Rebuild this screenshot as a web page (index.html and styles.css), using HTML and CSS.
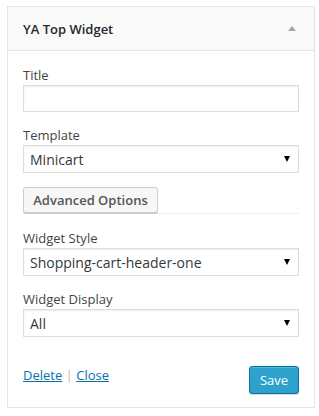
FILE: index.html
```html
<!DOCTYPE html>
<html lang="en">
<head>
    <meta charset="UTF-8">
    <title>YA Top Widget</title>
    <link rel="stylesheet" href="styles.css">
</head>
<body>

<div class="widget">
    <div class="widget-top">
        <h3>YA Top Widget</h3>
        <span class="toggle"></span>
    </div>

    <div class="widget-inside">
        <p class="field">
            <label for="title">Title</label>
            <input type="text" id="title">
        </p>
        <p class="field">
            <label for="template">Template</label>
            <span class="select-wrap">
                <select id="template">
                    <option>Minicart</option>
                </select>
            </span>
        </p>
        <div class="advanced">
            <button class="button">Advanced Options</button>
        </div>
        <p class="field">
            <label for="style">Widget Style</label>
            <span class="select-wrap">
                <select id="style">
                    <option>Shopping-cart-header-one</option>
                </select>
            </span>
        </p>
        <p class="field">
            <label for="display">Widget Display</label>
            <span class="select-wrap">
                <select id="display">
                    <option>All</option>
                </select>
            </span>
        </p>

        <div class="widget-actions">
            <div class="links">
                <a href="#">Delete</a> <span class="sep">|</span> <a href="#">Close</a>
            </div>
            <button class="button-primary">Save</button>
        </div>
    </div>
</div>

</body>
</html>
```

FILE: styles.css
```css
body {
    margin: 0;
    background: #fff;
    font-family: "Open Sans", "Liberation Sans", sans-serif;
    font-size: 13px;
    color: #444;
}
.widget {
    width: 308px;
    box-sizing: border-box;
    margin: 6px 0 0 7px;
    border: 1px solid #e5e5e5;
    background: #fff;
    box-shadow: 0 1px 1px rgba(0, 0, 0, 0.04);
}
.widget-top {
    height: 43px;
    background: #fafafa;
    border-bottom: 1px solid #e5e5e5;
    display: flex;
    align-items: center;
    justify-content: space-between;
    padding: 0 15px;
}
.widget-top h3 {
    margin: 0;
    font-size: 13px;
    font-weight: 600;
    color: #23282d;
}
.toggle {
    width: 0;
    height: 0;
    margin-right: 3px;
    border-left: 4px solid transparent;
    border-right: 4px solid transparent;
    border-bottom: 5px solid #a0a5aa;
}
.widget-inside {
    padding: 14px 15px 13px;
}
.field {
    margin: 0 0 13px;
}
.field label {
    display: block;
    line-height: 20px;
    color: #444;
}
input[type="text"], select {
    display: block;
    width: 100%;
    box-sizing: border-box;
    border: 1px solid #ddd;
    box-shadow: inset 0 1px 2px rgba(0, 0, 0, 0.07);
    background: #fff;
    font-family: inherit;
    color: #32373c;
    margin: 0;
}
input[type="text"] {
    height: 27px;
}
select {
    height: 28px;
    padding: 0 20px 0 6px;
    font-size: 14px;
    border-radius: 0;
    appearance: none;
    -webkit-appearance: none;
}
.select-wrap {
    display: block;
    position: relative;
}
.select-wrap::after {
    content: "";
    position: absolute;
    right: 9px;
    top: 11px;
    border-left: 3px solid transparent;
    border-right: 3px solid transparent;
    border-top: 6px solid #000;
}
.advanced {
    border-bottom: 1px solid #eee;
    margin: 0 0 14px;
    padding-top: 1px;
}
.button {
    display: block;
    height: 26px;
    width: 135px;
    padding: 0;
    white-space: nowrap;
    background: #f7f7f7;
    border: 1px solid #ccc;
    border-radius: 3px;
    box-shadow: 0 1px 0 #ccc;
    font-family: inherit;
    font-size: 13px;
    font-weight: 600;
    color: #555;
    cursor: pointer;
}
.widget-actions {
    display: flex;
    justify-content: space-between;
    align-items: flex-start;
    padding-top: 16px;
}
.links {
    line-height: 18px;
    font-size: 13px;
}
.links a {
    color: #0073aa;
    text-decoration: underline;
}
.sep {
    color: #d7b98c;
}
.button-primary {
    height: 28px;
    width: 50px;
    background: #2ea2cc;
    border: 1px solid #0074a2;
    border-radius: 3px;
    box-shadow: inset 0 1px 0 rgba(120, 200, 230, 0.5), 0 1px 0 rgba(0, 0, 0, 0.15);
    color: #fff;
    font-family: inherit;
    font-size: 13px;
    cursor: pointer;
    padding: 0;
}
```
